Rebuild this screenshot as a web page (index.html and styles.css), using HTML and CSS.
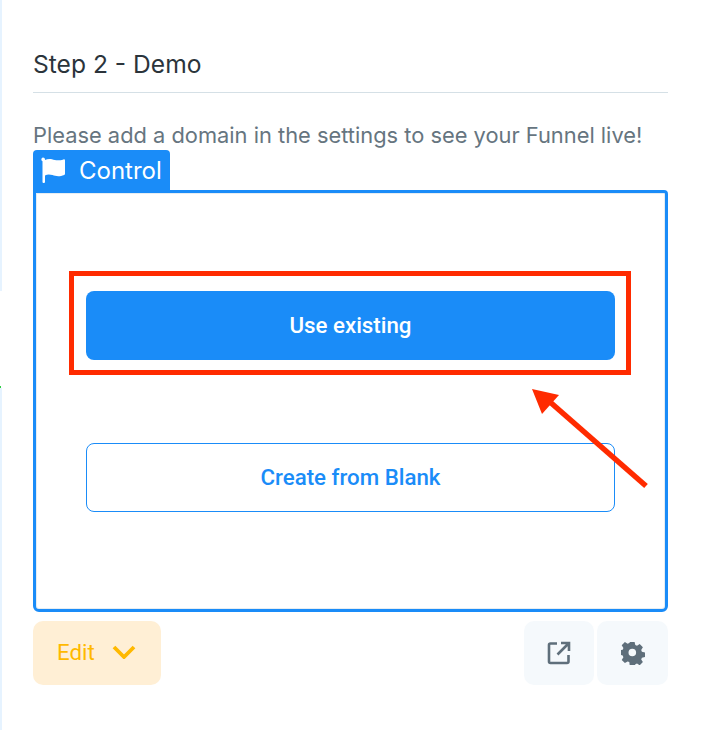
FILE: index.html
```html
<html>

<head>
	<title>
		Step 2 - Demo
	</title>

	<link rel="stylesheet" href="styles.css">
</head>

<body>
	<div class="edge edge-top"></div>
	<div class="edge edge-bottom"></div>
	<div class="edge-mark"></div>

	<div class="page">
		<h2 class="step-title">Step 2 - Demo</h2>
		<p class="hint">Please add a domain in the settings to see your Funnel live!</p>

		<div class="variant-tab">
			<svg class="flag-icon" viewBox="0 0 26 28" width="26" height="28">
				<path d="M3 1.500a2 2 0 0 1 2 2v.6C7 3 9.500 2.500 12 3.200c3 .9 6 2 11.500.2.800-.2 1.500.3 1.500 1v13.400c0 .5-.3.900-.8 1.100-5 2.100-8.700 1.100-11.700.2-2.800-.8-5.300-.9-7.500.4V26a1 1 0 0 1-1 1H3.500a1 1 0 0 1-1-1V5.300A2 2 0 0 1 3 1.500z" fill="#fff" />
			</svg>
			<span>Control</span>
		</div>

		<div class="variant-box">
			<button class="btn btn-solid">Use existing</button>
			<button class="btn btn-outline">Create from Blank</button>
		</div>

		<div class="actions">
			<button class="edit-btn">
				<span>Edit</span>
				<svg viewBox="0 0 24 14" width="24" height="14">
					<path d="M2 2l10 10 10-10" fill="none" stroke="#ffb900" stroke-width="3.800" />
				</svg>
			</button>
			<div class="icon-btns">
				<button class="icon-btn">
					<svg viewBox="0 0 24 24" width="24" height="24">
						<path d="M10 2.500H3.500a1.500 1.500 0 0 0-1.500 1.500v16.500a1.500 1.500 0 0 0 1.500 1.500H20a1.500 1.500 0 0 0 1.500-1.500V14" fill="none" stroke="#5f6f7b" stroke-width="2.600" />
						<path d="M10.500 13.500L21 3M14 2h8v8" fill="none" stroke="#5f6f7b" stroke-width="2.600" />
					</svg>
				</button>
				<button class="icon-btn">
					<svg viewBox="0 0 24 24" width="24" height="24">
						<path fill-rule="evenodd" fill="#5f6f7b" d="M9.700 1h4.600l.7 3.100 1.700.7 2.700-1.700 3.200 3.200-1.700 2.700.7 1.700 3.100.7v4.600l-3.100.7-.7 1.700 1.700 2.700-3.200 3.200-2.700-1.700-1.700.7-.7 3.100H9.700L9 21.100l-1.700-.7-2.700 1.700-3.200-3.200 1.700-2.700-.7-1.700L-.7 13.600V9.400l3.100-.7.7-1.700-1.700-2.700 3.200-3.200 2.700 1.700L9 2.100zM12 7.700a3.800 3.800 0 1 0 0 7.600 3.800 3.800 0 0 0 0-7.600z" transform="translate(-.7 0)" />
					</svg>
				</button>
			</div>
		</div>
	</div>

	<!-- annotation drawn on top of the screenshot -->
	<div class="highlight"></div>
	<svg class="arrow" viewBox="0 0 130 110" width="130" height="110">
		<path d="M114 97L18 13" stroke="#ff2b00" stroke-width="5.500" fill="none" />
		<path d="M0 0L27 6L10 25z" fill="#ff2b00" />
	</svg>
</body>

</html>
```

FILE: styles.css
```css
html,
body {
	margin: 0px;
	padding: 0px;
	width: 100%;
	height: 100%;
	background-color: #fff;
	overflow: hidden;
}

body {
	position: relative;
	font-family: Inter, "Liberation Sans", sans-serif;
}

.edge {
	position: absolute;
	left: 0px;
	width: 2px;
	background-color: #e6f3ff;
}

.edge-top {
	top: 0px;
	height: 291px;
}

.edge-bottom {
	top: 388px;
	bottom: 0px;
}

.edge-mark {
	position: absolute;
	left: 0px;
	top: 386px;
	width: 1px;
	height: 2px;
	background-color: #2ecc40;
}

.page {
	display: flex;
	flex-direction: column;
	width: 635px;
	margin-left: 33px;
	padding-top: 49px;
}

.step-title {
	margin: 0px;
	padding-bottom: 12px;
	border-bottom: 1px solid #d5e0e6;
	font-size: 24.600px;
	line-height: 31px;
	font-weight: 400;
	color: #2b343b;
}

.hint {
	margin: 28px 0px 0px 0px;
	font-size: 21.850px;
	line-height: 29px;
	color: #66757f;
}

.variant-tab {
	display: flex;
	align-items: center;
	gap: 13px;
	align-self: flex-start;
	box-sizing: border-box;
	width: 137px;
	height: 40px;
	padding-left: 7px;
	background-color: #1a8cf8;
	border-radius: 4px 4px 0px 0px;
	font-size: 24px;
	color: #fff;
}

.flag-icon {
	flex: none;
}

.variant-box {
	display: flex;
	flex-direction: column;
	gap: 83px;
	box-sizing: border-box;
	height: 422px;
	padding: 98px 50px 0px 50px;
	border: 3px solid #1a8cf8;
	border-radius: 0px 4px 6px 6px;
	box-shadow: inset 0px 0px 0px 1px #e6edf2;
}

.btn {
	display: block;
	width: 100%;
	height: 69px;
	padding: 0px 0px 2px 0px;
	border-radius: 8px;
	font-family: Roboto, sans-serif;
	font-size: 22.300px;
	font-weight: 500;
}

.btn-solid {
	background-color: #1a8cf8;
	border: 0px;
	color: #fff;
}

.btn-outline {
	background-color: #fff;
	border: 1px solid #1a8cf8;
	color: #1a8cf8;
}

.actions {
	display: flex;
	justify-content: space-between;
	margin-top: 9px;
}

.edit-btn {
	display: flex;
	align-items: center;
	gap: 17px;
	box-sizing: border-box;
	width: 128px;
	height: 64px;
	padding: 0px 0px 2px 24px;
	background-color: #ffefd5;
	border: 0px;
	border-radius: 10px;
	font-family: Roboto, sans-serif;
	font-size: 22.300px;
	font-weight: 400;
	color: #ffb900;
}

.icon-btns {
	display: flex;
	gap: 3px;
}

.icon-btn {
	display: flex;
	align-items: center;
	justify-content: center;
	width: 70px;
	height: 64px;
	padding: 0px;
	background-color: #f5f9fc;
	border: 0px;
	border-radius: 10px;
}

.icon-btn:last-child {
	width: 71px;
}

.highlight {
	position: absolute;
	left: 69px;
	top: 271px;
	width: 552px;
	height: 94px;
	border: 5px solid #ff2b00;
}

.arrow {
	position: absolute;
	left: 532px;
	top: 389px;
}
```
